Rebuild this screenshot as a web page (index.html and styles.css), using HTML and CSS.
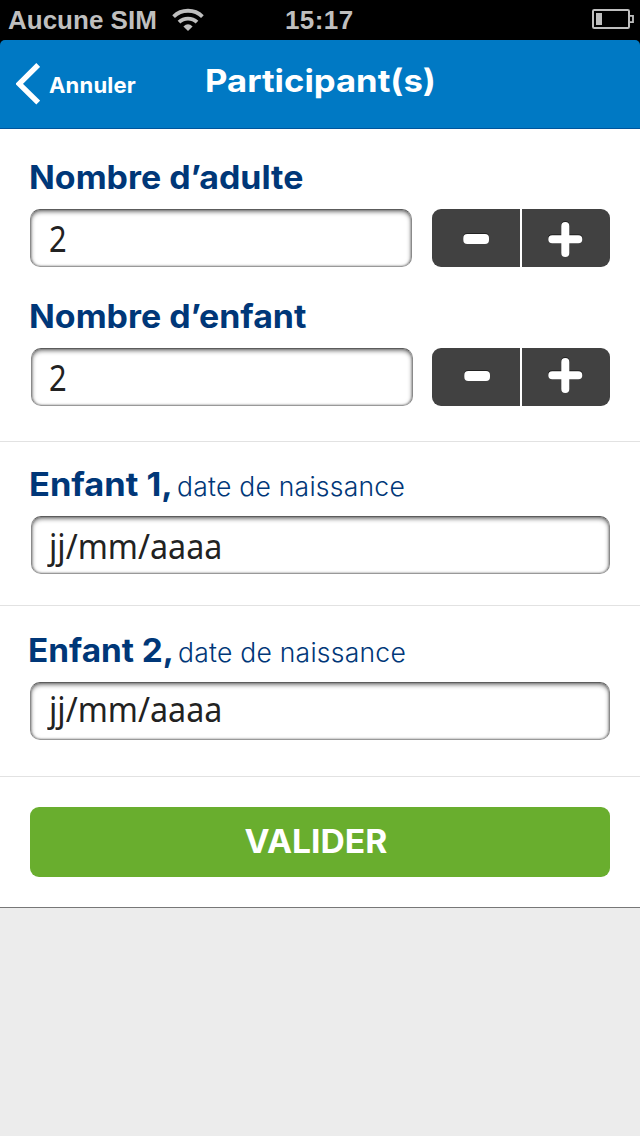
FILE: index.html
```html
<!DOCTYPE html>
<html lang="fr">
<head>
<meta charset="utf-8">
<title>Participant(s)</title>
<link rel="stylesheet" href="styles.css">
</head>
<body>
<div class="status">
  <span class="carrier">Aucune SIM</span>
  <svg class="wifi" width="32" height="24" viewBox="0 0 32 24">
    <g fill="none" stroke="#bfbfbf" stroke-width="3.8">
      <path d="M1.6 8.6C9.5 0.8 22.5 0.8 30.4 8.6"/>
      <path d="M7 14.2C12 9.3 20 9.3 25 14.2"/>
    </g>
    <path d="M11.4 18.4Q16 14.2 20.6 18.4L16 23Z" fill="#bfbfbf"/>
  </svg>
  <span class="clock">15:17</span>
  <svg class="battery" width="42" height="20" viewBox="0 0 42 20">
    <rect x="1" y="1" width="36" height="18" rx="1.2" fill="none" stroke="#bfbfbf" stroke-width="2"/>
    <path d="M38 6.8H41V13.2H38" fill="none" stroke="#bfbfbf" stroke-width="1.8"/>
    <rect x="4" y="4" width="6" height="12" fill="#bfbfbf"/>
  </svg>
</div>
<header class="navbar">
  <a class="back">
    <svg width="24" height="42" viewBox="0 0 24 42"><path d="M22.2 2L3.2 20.8L22.2 39.6" fill="none" stroke="#fff" stroke-width="5.4"/></svg>
    <span class="back-label">Annuler</span>
  </a>
  <h1 class="title">Participant(s)</h1>
</header>
<main class="form">
  <section class="group counts">
    <h2 class="label"><span class="wide">Nombre d’adulte</span></h2>
    <div class="row">
      <div class="field number"><span class="value">2</span></div>
      <div class="stepper">
        <div class="step"><svg width="88" height="58" viewBox="0 0 88 58"><rect class="shade" x="31.3" y="24" width="25.7" height="10" rx="4"/><rect x="31.3" y="25" width="25.7" height="10" rx="4"/></svg></div>
        <div class="step"><svg width="88" height="58" viewBox="0 0 88 58"><path class="shade" d="M30 29.2H56.6M43.3 16V43"/><path d="M30.3 30.2H56.3M43.3 17V44"/></svg></div>
      </div>
    </div>
    <h2 class="label child"><span class="wide">Nombre d’enfant</span></h2>
    <div class="row child-row">
      <div class="field number"><span class="value">2</span></div>
      <div class="stepper">
        <div class="step"><svg width="88" height="58" viewBox="0 0 88 58"><rect class="shade" x="32.3" y="22" width="25.7" height="10" rx="4"/><rect x="32.3" y="23" width="25.7" height="10" rx="4"/></svg></div>
        <div class="step"><svg width="88" height="58" viewBox="0 0 88 58"><path class="shade" d="M30 26.2H56.6M43.3 13V40"/><path d="M30.3 27.2H56.3M43.3 14V41"/></svg></div>
      </div>
    </div>
  </section>
  <section class="group first">
    <h2 class="label"><span class="who">Enfant 1,</span><span class="hint">date de naissance</span></h2>
    <div class="field date"><span class="value">jj/mm/aaaa</span></div>
  </section>
  <section class="group second">
    <h2 class="label"><span class="who">Enfant 2,</span><span class="hint">date de naissance</span></h2>
    <div class="field date"><span class="value">jj/mm/aaaa</span></div>
  </section>
  <section class="group action">
    <button class="submit"><span class="submit-label">VALIDER</span></button>
  </section>
</main>
</body>
</html>
```

FILE: styles.css
```css
* { box-sizing: border-box; }
body {
  margin: 0;
  height: 1136px;
  background: #ececec;
  font-family: Inter, "Open Sans", sans-serif;
  overflow: hidden;
}
h1, h2 { margin: 0; }
svg { display: block; flex: none; }
.status {
  display: grid;
  grid-template-columns: 164px 120px 300px 42px;
  align-items: center;
  height: 40px;
  padding-left: 8px;
  background: #000;
  color: #bfbfbf;
  font: bold 26px/40px "Liberation Sans", Arial, sans-serif;
  white-space: nowrap;
}
.battery { margin-bottom: 2px; }
.wifi { margin-bottom: 1px; }
.clock { margin-left: -7px; letter-spacing: 0.4px; }
.navbar {
  display: grid;
  grid-template-columns: 205px 1fr;
  height: 89px;
  background: #0079c4;
  border-bottom: 1px solid #00559c;
  border-radius: 5px 5px 0 0;
  color: #fff;
  box-shadow: 0 -6px 0 #000;
}
.back { display: flex; align-items: center; padding-left: 16px; gap: 9px; }
.back-label { font-size: 22px; font-weight: 700; line-height: 30px; padding-top: 2px; letter-spacing: 0.2px; }
.title {
  justify-self: start;
  font-size: 31.5px;
  font-weight: 700;
  line-height: 40px;
  margin-top: 21px;
  white-space: nowrap;
  transform: scaleX(1.1);
  transform-origin: left;
}
.form { background: #fff; border-bottom: 1px solid #777; }
.group { padding: 0 30px; }
.group + .group { border-top: 1px solid #e2e2e2; }
.counts { height: 312px; padding-top: 29px; }
.first { height: 164px; padding-top: 23px; }
.second { height: 171px; padding-top: 25px; }
.action { height: 131px; padding-top: 30px; }
.label {
  display: flex;
  align-items: baseline;
  height: 51px;
  color: #003778;
  font-size: 32px;
  font-weight: 700;
  line-height: 40px;
  white-space: nowrap;
}
.label.child { margin-top: 30px; }
.wide, .who, .value { display: inline-block; transform-origin: left; }
.wide { transform: translateX(-1px) scaleX(1.06); }
.who { width: 147px; transform: translateX(-1px) scaleX(1.075); }
.second .who { width: 148px; transform: translateX(-2px) scaleX(1.042); }
.hint { font-size: 26.5px; font-weight: 300; letter-spacing: 0.25px; }
.row { display: grid; grid-template-columns: 382px 178px; gap: 20px; }
.child-row .field { margin: 0 -1px 0 1px; }
.child-row .value { margin-left: -1px; }
.field {
  height: 58px;
  padding-left: 18px;
  border: 1px solid #8a8a8a;
  border-color: #5c5c5c #8a8a8a #999;
  border-radius: 10px;
  box-shadow: inset 0 2px 4px rgba(0, 0, 0, 0.5), inset 0 0 2px rgba(0, 0, 0, 0.4);
  background: #fff;
  color: #222;
  font-family: "Noto Sans", "Open Sans", sans-serif;
  font-size: 34.5px;
  line-height: 58px;
}
.number { font-size: 35.5px; line-height: 57px; }
.number .value { transform: scaleX(0.87); }
.date { padding-left: 18px; }
.date .value { transform: scaleX(0.935); }
.first .field { margin-left: 1px; padding-left: 17px; }
.second .field { line-height: 52px; }
.stepper { display: grid; grid-template-columns: 88px 88px; gap: 2px; height: 58px; border-radius: 9px; overflow: hidden; }
.step { background: #414141; }
.step rect { fill: #fff; }
.step path { fill: none; stroke: #fff; stroke-width: 8; stroke-linecap: round; }
.step rect.shade { fill: #222; }
.step path.shade { stroke: #222; }
.submit {
  display: block;
  width: 100%;
  height: 70px;
  padding: 0 9px 0 0;
  border: 0;
  border-radius: 9px;
  background: #69ae2e;
  color: #fff;
  font: 700 32px/70px Inter, sans-serif;
}
.submit-label { display: inline-block; transform: scaleX(1.05); }
```
